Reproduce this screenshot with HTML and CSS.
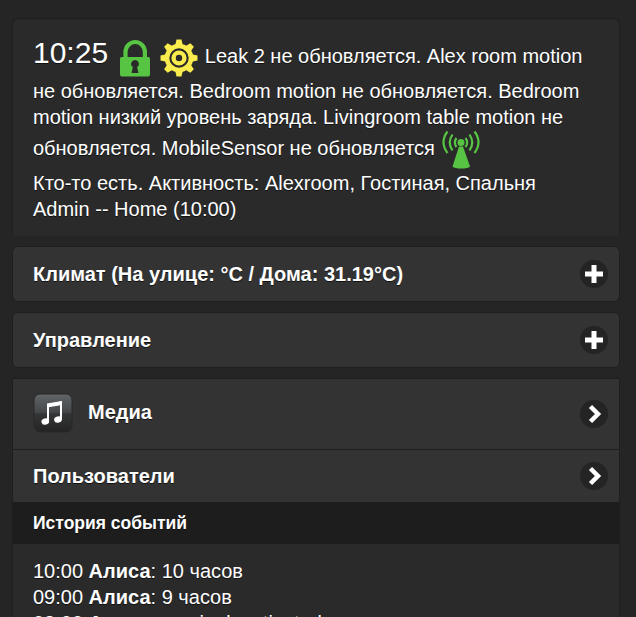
FILE: index.html
```
<!DOCTYPE html>
<html lang="ru">
<head>
<meta charset="utf-8">
<title>Home</title>
<link rel="stylesheet" href="styles.css">
</head>
<body>
<main class="page">
  <section class="status">
    <span class="clock">10:25</span>
    <svg class="icon" viewBox="0 0 40 40"><path d="M11.500 20V14a9.700 10 0 0 1 19.400 0v6" fill="none" stroke="#57c443" stroke-width="4.200"/><path fill="#57c443" fill-rule="evenodd" d="M7.500 19h27a1.500 1.500 0 0 1 1.500 1.500v16a2 2 0 0 1-2 2H8a2 2 0 0 1-2-2v-16A1.500 1.500 0 0 1 7.500 19Zm13.500 3a3.800 3.800 0 0 0-2.100 7l-1.400 6h7l-1.400-6A3.800 3.800 0 0 0 21 22Z"/></svg>
    <svg class="icon" viewBox="0 0 40 40"><g fill="#faec4c"><g id="teeth"><path d="M17.500 1.500h5l1.800 8h-8.600Z"/><path d="M17.500 38.500h5l1.800-8h-8.600Z"/><path d="M1.500 17.500v5l8 1.800v-8.600Z"/><path d="M38.500 17.500v5l-8 1.800v-8.600Z"/></g><use href="#teeth" transform="rotate(45 20 20)"/></g><circle cx="20" cy="20" r="12" fill="none" stroke="#faec4c" stroke-width="4.600"/><circle cx="20" cy="20" r="5.400" fill="none" stroke="#faec4c" stroke-width="4.400"/></svg>
    Leak 2 не обновляется. Alex room motion не обновляется. Bedroom motion не обновляется. Bedroom motion низкий уровень заряда. Livingroom table motion не обновляется. MobileSensor не обновляется
    <svg class="icon" viewBox="0 0 40 40"><path fill="#57c443" d="M18 16.500h4L29 36.500c-2 2.700-15.500 2.700-17.500 0Z"/><circle cx="20" cy="12.500" r="3.500" fill="#57c443"/><path d="M15.500 8q-3.300 4.500 0 9M24.500 8q3.300 4.500 0 9M11.500 4.500q-5.500 8 0 16M28.500 4.500q5.500 8 0 16M6.500 1.500q-8 10.500 0 21.500M33.500 1.500q8 10.500 0 21.500" fill="none" stroke="#57c443" stroke-width="2.200"/></svg>
    <br>Кто-то есть. Активность: Alexroom, Гостиная, Спальня
    <br>Admin -- Home (10:00)
  </section>

  <h2 class="fold">Климат (На улице: °C / Дома: 31.19°C)
    <svg class="badge" viewBox="0 0 28 28"><circle cx="14" cy="14" r="14"/><path d="M14 5v18M5 14h18"/></svg>
  </h2>
  <h2 class="fold">Управление
    <svg class="badge" viewBox="0 0 28 28"><circle cx="14" cy="14" r="14"/><path d="M14 5v18M5 14h18"/></svg>
  </h2>

  <section class="list">
    <a class="row media">
      <svg class="thumb" viewBox="0 0 40 40"><defs><linearGradient id="tile" x2="0" y2="1"><stop stop-color="#626567"/><stop offset=".48" stop-color="#45484a"/><stop offset=".52" stop-color="#353637"/><stop offset="1" stop-color="#242424"/></linearGradient></defs><rect x="1" y="1" width="38" height="38" rx="6" fill="url(#tile)" stroke="#292929"/><path d="M15 29V12l13-2.500V26" fill="none" stroke="#fff" stroke-width="2"/><path fill="#fff" d="M14 10.500l15-2.500v4L14 14.500Z"/><ellipse cx="12.300" cy="28.500" rx="3.900" ry="3.200" transform="rotate(-15 12.300 28.500)" fill="#fff"/><ellipse cx="25" cy="26.500" rx="3.900" ry="3.200" transform="rotate(-15 25 26.500)" fill="#fff"/></svg>
      <span class="label">Медиа</span>
      <svg class="badge" viewBox="0 0 28 28"><circle cx="14" cy="14" r="14"/><path d="M10.500 6.500 18 14l-7.500 7.500"/></svg>
    </a>
    <a class="row users">
      <span class="label">Пользователи</span>
      <svg class="badge" viewBox="0 0 28 28"><circle cx="14" cy="14" r="14"/><path d="M10.500 6.500 18 14l-7.500 7.500"/></svg>
    </a>
    <h3 class="divider">История событий</h3>
    <div class="history">
      10:00 <b>Алиса</b>: 10 часов<br>
      09:00 <b>Алиса</b>: 9 часов<br>
      08:00 <b>Алиса</b>: eco is deactivated
    </div>
  </section>
</main>
</body>
</html>
```
FILE: styles.css
```
* { box-sizing: border-box; }

html, body { height: 100%; }

body {
  margin: 0;
  overflow: hidden;
  background: #252525;
  color: #fff;
  font: 20px/26px "Liberation Sans", Arial, sans-serif;
  text-shadow: 0 1px 0 #111;
}

.page { padding: 18px 16px 0 12px; }

.status {
  height: 218px;
  padding: 19px 20px 0;
  background: #2a2a2a;
  border: 1px solid #1f1f1f;
  border-bottom: 0;
  border-radius: 6px 6px 0 0;
}

.clock { font-size: 30px; }

.icon {
  width: 40px;
  height: 40px;
  vertical-align: middle;
}

.fold {
  display: flex;
  align-items: center;
  justify-content: space-between;
  height: 56px;
  margin: 10px 0;
  padding: 0 11px 0 20px;
  background: #333;
  border: 1px solid #1f1f1f;
  border-radius: 6px;
  font-size: 20px;
  font-weight: bold;
}

.badge {
  flex: none;
  width: 28px;
  height: 28px;
}

.badge circle { fill: #242424; }

.badge path {
  fill: none;
  stroke: #fff;
  stroke-width: 5;
}

.row .badge path { stroke-width: 4.5; }

.list {
  background: #2a2a2a;
  border: 1px solid #1f1f1f;
}

.row {
  display: flex;
  align-items: center;
  padding: 0 11px 0 20px;
  background: #333;
  font-weight: bold;
}

.media {
  height: 71px;
  border-bottom: 1px solid #1f1f1f;
}

.media .thumb {
  width: 40px;
  height: 40px;
  margin: 0 15px 2px 0;
}

.media .label { padding-bottom: 4px; }

.users { height: 52px; }

.label { flex: 1; }

.divider {
  height: 42px;
  margin: 0 -1px;
  padding: 0 21px;
  background: #1d1d1d;
  font-size: 17.500px;
  line-height: 43px;
}

.history { padding: 14px 20px; }
```
